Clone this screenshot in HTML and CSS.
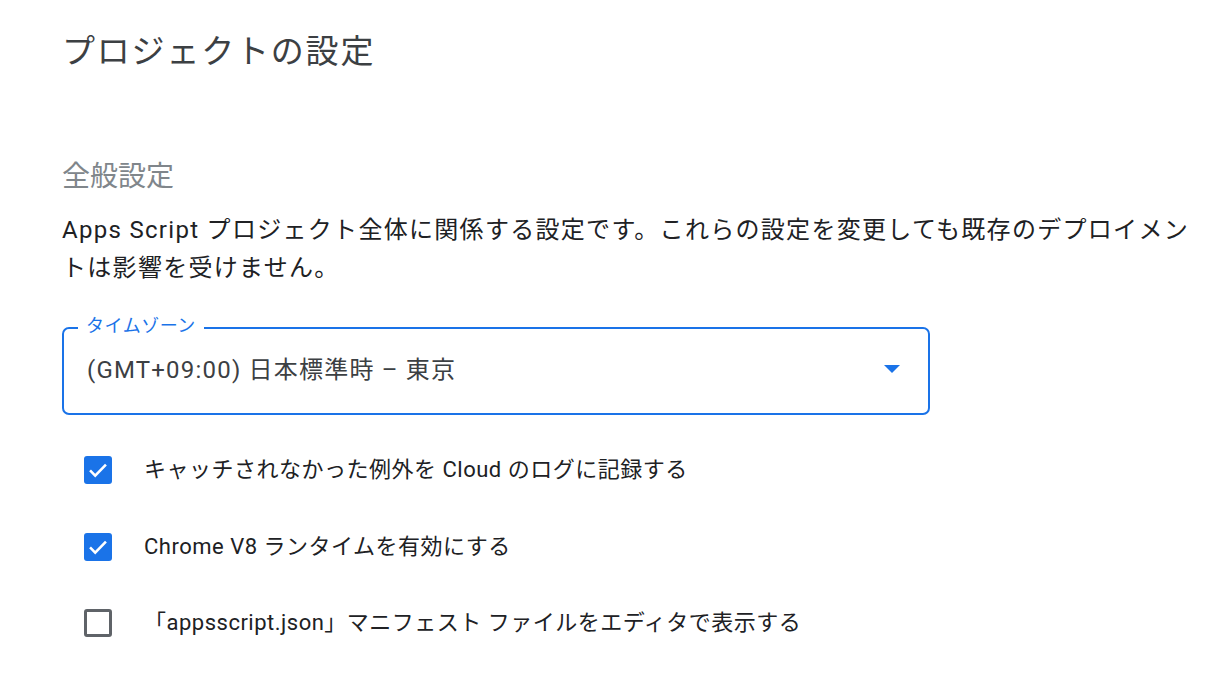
FILE: index.html
```html
<!DOCTYPE html>
<html lang="ja">
<head>
<meta charset="utf-8">
<title>プロジェクトの設定</title>
<link rel="stylesheet" href="styles.css">
</head>
<body>
<main class="page">
  <h1 class="title">プロジェクトの設定</h1>
  <h2 class="section-title">全般設定</h2>
  <p class="desc">Apps Script プロジェクト全体に関係する設定です。これらの設定を変更しても既存のデプロイメントは影響を受けません。</p>

  <div class="select">
    <span class="select-label">タイムゾーン</span>
    <span class="select-value">(GMT+09:00) 日本標準時 – 東京</span>
    <span class="select-arrow"></span>
  </div>

  <ul class="options">
    <li class="option">
      <span class="box checked">
        <svg viewBox="0 0 24 24" width="28" height="28"><path d="M5.2 12.4 L9.6 16.8 L18.8 7.4" fill="none" stroke="#fff" stroke-width="2.2"/></svg>
      </span>
      <span class="option-text">キャッチされなかった例外を Cloud のログに記録する</span>
    </li>
    <li class="option">
      <span class="box checked">
        <svg viewBox="0 0 24 24" width="28" height="28"><path d="M5.2 12.4 L9.6 16.8 L18.8 7.4" fill="none" stroke="#fff" stroke-width="2.2"/></svg>
      </span>
      <span class="option-text">Chrome V8 ランタイムを有効にする</span>
    </li>
    <li class="option">
      <span class="box"></span>
      <span class="option-text">「appsscript.json」マニフェスト ファイルをエディタで表示する</span>
    </li>
  </ul>
</main>
</body>
</html>
```

FILE: styles.css
```css
* { box-sizing: border-box; }
html, body { margin: 0; padding: 0; background: #fff; }
body {
  font-family: Roboto, "Noto Sans CJK JP", sans-serif;
  color: #202124;
  width: 1208px;
  height: 692px;
  overflow: hidden;
}
.page {
  padding-left: 62px;
}
.title {
  margin: 32px 0 0;
  font-size: 33px;
  line-height: 40px;
  font-weight: 400;
  color: #3c4043;
  letter-spacing: 1.8px;
}
.section-title {
  margin: 87px 0 0;
  font-size: 28px;
  line-height: 36px;
  font-weight: 400;
  color: #80868b;
}
.desc {
  margin: 16px 0 0;
  width: 1136px;
  font-size: 24px;
  line-height: 38px;
  letter-spacing: 1.3px;
  color: #202124;
}
.select {
  position: relative;
  margin-top: 40px;
  width: 868px;
  height: 88px;
  border: 2px solid #1a73e8;
  border-radius: 7px;
  display: flex;
  align-items: center;
  padding: 0 28px 0 23px;
}
.select-label {
  position: absolute;
  left: 14px;
  top: -14px;
  padding: 0 8px;
  background: #fff;
  color: #1a73e8;
  font-size: 18px;
  line-height: 22px;
  letter-spacing: 0.5px;
}
.select-value {
  flex: 1;
  font-size: 24px;
  line-height: 30px;
  color: #3c4043;
  letter-spacing: 1.2px;
  margin-top: -2px;
}
.select-arrow {
  width: 0;
  height: 0;
  border-left: 8px solid transparent;
  border-right: 8px solid transparent;
  border-top: 8px solid #1a73e8;
  margin-top: -4px;
}
.options {
  list-style: none;
  margin: 17px 0 0;
  padding: 0;
}
.option {
  height: 76.5px;
  display: flex;
  align-items: center;
  padding-left: 22px;
}
.box {
  width: 28px;
  height: 28px;
  border-radius: 3px;
  border: 3px solid #5f6368;
  flex: none;
  display: flex;
  align-items: center;
  justify-content: center;
}
.box.checked {
  background: #1a73e8;
  border: none;
}
.option-text {
  margin-left: 32px;
  font-size: 22px;
  line-height: 30px;
  color: #202124;
  letter-spacing: 0.5px;
}
```
